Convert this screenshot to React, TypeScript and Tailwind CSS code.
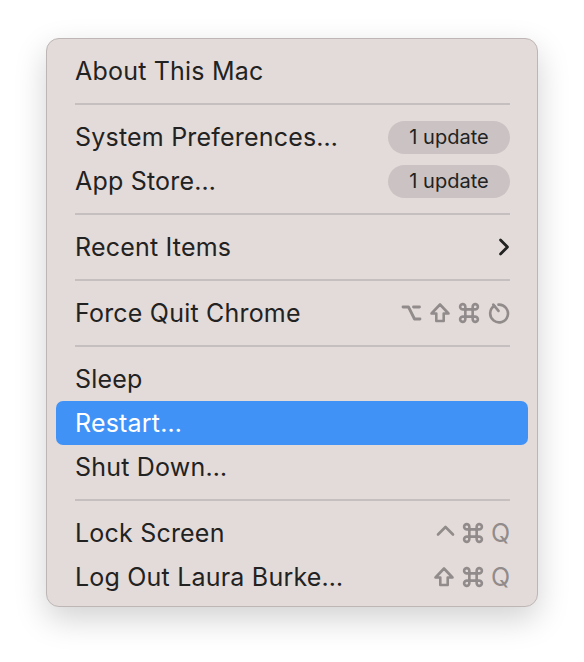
import React from 'react';

const Option = () => (
  <svg width="21" height="20" viewBox="0 0 21 20" fill="none" stroke="currentColor" strokeWidth="2.8" strokeLinecap="round" strokeLinejoin="round">
    <path d="M2 4h5.5l6 12h5.5M12.5 4h6" />
  </svg>
);

const Shift = () => (
  <svg width="22" height="22" viewBox="0 0 22 22" fill="none" stroke="currentColor" strokeWidth="2.6" strokeLinejoin="round">
    <path d="M11 2.5 2.5 11.5h4.8v7.5h7.4v-7.5h4.8z" />
  </svg>
);

const Command = () => (
  <svg width="22" height="22" viewBox="0 0 21 21" fill="none" stroke="currentColor" strokeWidth="2.5">
    <path d="M7 7v7M14 7v7M7 7h7M7 14h7" />
    <path d="M7 7H5a2.5 2.5 0 1 1 2-2.5V7zM14 7h2a2.5 2.5 0 1 0-2-2.5V7zM7 14H5a2.5 2.5 0 1 0 2 2.5V14zM14 14h2a2.5 2.5 0 1 1-2 2.5V14z" />
  </svg>
);

const Restart = () => (
  <svg width="23" height="23" viewBox="0 0 22 22" fill="none" stroke="currentColor" strokeWidth="2.5" strokeLinecap="round">
    <path d="M7 3.8A8.5 8.5 0 1 0 11 2.5" />
    <path d="M6 2.5l5 6" />
  </svg>
);

const Control = () => (
  <svg width="19" height="18" viewBox="0 0 19 18" fill="none" stroke="currentColor" strokeWidth="2.6" strokeLinecap="round" strokeLinejoin="round">
    <path d="M2 10.5l7.5-7.5 7.5 7.5" />
  </svg>
);

const Chevron = () => (
  <svg width="12" height="18" viewBox="0 0 12 18" fill="none" stroke="#222" strokeWidth="2.8" strokeLinecap="round" strokeLinejoin="round">
    <path d="M2.5 2l7 7-7 7" />
  </svg>
);

const Badge = () => (
  <span className="h-[33px] w-[122px] rounded-full bg-[#cbc3c3] flex items-center justify-center text-[20px] text-[#222]">
    1 update
  </span>
);

function Row({ label, right, active }: { label: string; right?: React.ReactNode; active?: boolean }) {
  return (
    <div
      className={
        'h-[44px] flex items-center justify-between pl-[19px] pr-[18px] rounded-[7px] ' +
        (active ? 'bg-[#4192f7] text-white' : 'text-[#222]')
      }
    >
      <span className="text-[25px] leading-none tracking-[0.2px]">{label}</span>
      {right}
    </div>
  );
}

const Sep = () => (
  <div className="h-[22px] flex items-center px-[19px] pr-[18px]">
    <div className="h-[2px] w-full bg-[#c6bfbf]" />
  </div>
);

const Keys = ({ children }: { children: React.ReactNode }) => (
  <span className="flex items-center gap-[7px] text-[#918b8b]">{children}</span>
);

const Q = () => <span className="text-[25px] leading-none text-[#918b8b]">Q</span>;

export default function App() {
  return (
    <div
      className="w-[584px] h-[662px] bg-white flex justify-center pt-[38px]"
      style={{ fontFamily: 'Inter, "Noto Sans", sans-serif' }}
    >
      <div className="w-[492px] h-[569px] bg-[#e3dbd9] rounded-[13px] border border-[#bdb6b5] shadow-[0_12px_32px_rgba(0,0,0,0.18)] px-[9px] pt-[10px] pb-[8px]">
        <Row label="About This Mac" />
        <Sep />
        <Row label="System Preferences…" right={<Badge />} />
        <Row label="App Store…" right={<Badge />} />
        <Sep />
        <Row label="Recent Items" right={<Chevron />} />
        <Sep />
        <Row
          label="Force Quit Chrome"
          right={
            <Keys>
              <Option />
              <Shift />
              <Command />
              <Restart />
            </Keys>
          }
        />
        <Sep />
        <Row label="Sleep" />
        <Row label="Restart…" active />
        <Row label="Shut Down…" />
        <Sep />
        <Row
          label="Lock Screen"
          right={
            <Keys>
              <Control />
              <Command />
              <Q />
            </Keys>
          }
        />
        <Row
          label="Log Out Laura Burke…"
          right={
            <Keys>
              <Shift />
              <Command />
              <Q />
            </Keys>
          }
        />
      </div>
    </div>
  );
}
